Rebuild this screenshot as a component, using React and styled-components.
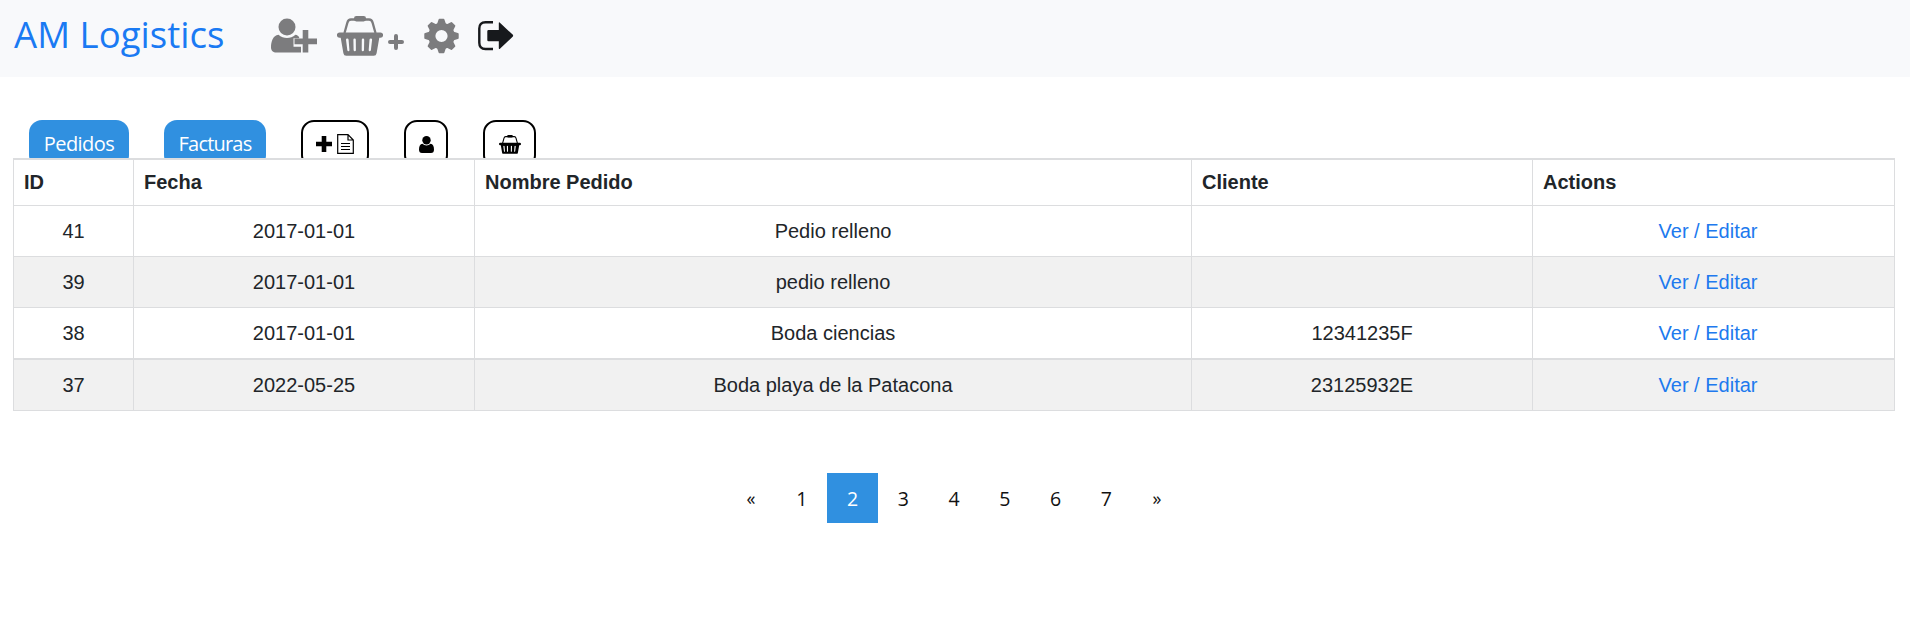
import React from "react";
import styled, { createGlobalStyle, css } from "styled-components";

const GlobalStyle = createGlobalStyle`
  * { box-sizing: border-box; }
  body {
    margin: 0;
    background: #fff;
    color: #212529;
    font-family: "Open Sans", "Noto Sans", sans-serif;
    font-size: 20px;
    overflow: hidden;
  }
`;

const Navbar = styled.header`
  display: flex;
  align-items: flex-start;
  height: 77px;
  padding-left: 14px;
  background: #f8f9fb;
`;

const Brand = styled.a`
  width: 257px;
  padding-top: 9px;
  color: #1a7af3;
  font-size: 36.5px;
  line-height: 50px;
  letter-spacing: 0.05px;
  white-space: nowrap;
  text-decoration: none;
`;

const NavIcons = styled.nav`
  display: flex;
  align-items: flex-start;
  padding-top: 14px;
  color: #7c7c7e;
`;

const NavIcon = styled.a`
  display: flex;
  margin-right: ${(p) => p.$gap || 0}px;
  color: ${(p) => (p.$dark ? "#17191c" : "inherit")};
  svg { display: block; }
`;

const Tabs = styled.div`
  display: flex;
  gap: 35px;
  height: 81px;
  padding: 43px 0 0 29px;
  overflow: hidden;
`;

const Tab = styled.button`
  display: flex;
  flex: none;
  align-items: center;
  justify-content: center;
  gap: 5px;
  width: ${(p) => p.$width}px;
  height: 48px;
  padding: 0;
  border-radius: 13px;
  font: inherit;
  ${(p) =>
    p.$filled
      ? css`
          padding-bottom: 2px;
          border: 0;
          background: #3090e0;
          color: #fff;
          letter-spacing: ${p.$tracking}px;
        `
      : css`
          border: 2px solid #000;
          background: #fff;
          color: #000;
        `}
  svg { display: block; }
`;

const Table = styled.div`
  width: 1882px;
  margin-left: 13px;
  border-top: 2px solid #dcdddf;
  border-right: 1px solid #dcdddf;
  font-family: "Liberation Sans", Arial, sans-serif;
`;

const Row = styled.div`
  display: grid;
  grid-template-columns: 120px 341px 717px 341px 362px;
  height: ${(p) => p.$height}px;
  border-bottom: ${(p) => p.$line || 1}px solid #dcdddf;
  background: ${(p) => (p.$striped ? "#f1f1f1" : "#fff")};
`;

const Cell = styled.div`
  display: flex;
  align-items: center;
  justify-content: center;
  padding-right: ${(p) => (p.$actions ? 11 : 0)}px;
  padding-bottom: 1px;
  border-left: 1px solid #dcdddf;
  line-height: 30px;
`;

const HeadCell = styled(Cell)`
  justify-content: flex-start;
  padding-left: 10px;
  padding-bottom: 2px;
  font-weight: 700;
`;

const ActionLink = styled.a`
  color: #2079ee;
  text-decoration: none;
`;

const Pagination = styled.nav`
  display: flex;
  justify-content: center;
  margin-top: 62px;
  padding-right: 2px;
`;

const Page = styled.a`
  width: 50.75px;
  height: 50px;
  line-height: 51px;
  text-align: center;
  text-decoration: none;
  font-size: ${(p) => (p.$arrow ? 18 : 19.5)}px;
  color: ${(p) => (p.$active ? "#fff" : "#111")};
  background: ${(p) => (p.$active ? "#3090e0" : "transparent")};
`;

const UserPlusIcon = () => (
  <svg width="47" height="40" viewBox="0 0 47 40" fill="currentColor">
    <circle cx="16" cy="13" r="8.5" />
    <path d="M7.5 20.8C10 23 13 24 16 24s6-1 8.4-3.2c1.800.300 3.200 1.300 4 2.900H28v.500h-5.500v8.500H30v5.900H5.300C2.200 38.600 0 36.600 0 33.500c0-5.600 1.800-12 7.500-12.700z" />
    <path d="M31.700 16h5.600v8.600H46v5.600h-8.700v8.400h-5.600v-8.400h-8.200v-5.600h8.200z" />
  </svg>
);

const BasketIcon = ({ width = 46, height = 42 }) => (
  <svg width={width} height={height} viewBox="0 0 46 42" fill="currentColor">
    <path d="M7.500 19 10.400 8.600Q11.200 5.500 14 5.500h18q2.800 0 3.600 3.100L38.500 19" fill="none" stroke="currentColor" strokeWidth="2.300" />
    <rect x="17" y="2" width="12" height="5.400" rx="2.300" />
    <path
      fillRule="evenodd"
      d="M2.500 18.600h41a2.500 2.500 0 0 1 0 5.200h-1.200l-2.700 15.400Q39.200 41.700 36.700 41.700H9.300Q6.800 41.700 6.400 39.200L3.700 23.800H2.500a2.500 2.500 0 0 1 0-5.200zM9 25.800l1.300 10.300q.2 1.200 1.200 1.200t.9-1.300l-.8-10.200q-.2-1.200-1.400-1.200T9 25.800zM16.400 25.800l.2 10.200q.1 1.300 1.200 1.300t1.100-1.300l-.1-10.200q0-1.200-1.200-1.200t-1.200 1.200zM24.800 25.800l-.1 10.200q0 1.300 1.100 1.300t1.200-1.300l.2-10.200q0-1.200-1.200-1.200t-1.200 1.200zM32.500 25.800l-.8 10.200q0 1.300 1 1.300t1.200-1.200l1.200-10.300q.1-1.200-1.200-1.200t-1.400 1.200z"
    />
  </svg>
);

const PlusIcon = ({ size = 16, top = 0, weight = 4, cap = "round" }) => (
  <svg width={size} height={size + top} viewBox={`0 ${-top} ${size} ${size + top}`} stroke="currentColor" strokeLinecap={cap}>
    <path
      d={cap === "round" ? `M${size / 2} 2v${size - 4}M2 ${size / 2}h${size - 4}` : `M${size / 2} 0v${size}M0 ${size / 2}h${size}`}
      strokeWidth={weight}
    />
  </svg>
);

const GearIcon = () => (
  <svg width="35" height="40" viewBox="-17.500 -22 35 40" fill="currentColor">
    <path
      fillRule="evenodd"
      d="M13.200 0A13.200 13.200 0 1 0-13.200 0A13.200 13.200 0 1 0 13.200 0zM6.100 0A6.100 6.100 0 1 1-6.100 0A6.100 6.100 0 1 1 6.100 0z"
    />
    {[0, 45, 90, 135, 180, 225, 270, 315].map((angle) => (
      <path
        key={angle}
        transform={`rotate(${angle})`}
        d="M-4.600-11.500-3-16.300Q-2.800-17.200-2-17.200H2Q2.800-17.200 3-16.300L4.600-11.500z"
      />
    ))}
  </svg>
);

const SignOutIcon = () => (
  <svg width="36" height="38" viewBox="0 0 36 38">
    <path d="M15 8.300H7.500Q1.300 8.300 1.300 14.500v14.300Q1.300 35 7.500 35H15" fill="none" stroke="currentColor" strokeWidth="2.400" />
    <path
      d="M10.500 16h10.300V9.300Q20.800 7.500 22.200 8.900L34.600 20.600Q35.700 21.700 34.600 22.800L22.200 34.500Q20.800 35.900 20.800 34V27.200H10.500Q9.300 27.200 9.300 26V17.200Q9.300 16 10.500 16z"
      fill="currentColor"
    />
  </svg>
);

const DocumentIcon = () => (
  <svg width="17" height="20" viewBox="0 0 17 20" fill="none" stroke="currentColor">
    <path d="M.700.700H11L16.300 6v13.300H.700zM11 .700V6h5.300" strokeWidth="1.200" />
    <path d="M4 9.500h9M4 12.500h9M4 15.500h9" strokeWidth="1.200" />
  </svg>
);

const UserIcon = () => (
  <svg width="15" height="17" viewBox="0 0 15 17" fill="currentColor">
    <circle cx="7.500" cy="4.300" r="4.200" />
    <path d="M3.400 7.800Q5.200 9.500 7.500 9.500t4.100-1.700Q15 8.300 15 13.500 15 17 12 17H3Q0 17 0 13.500 0 8.300 3.400 7.800z" />
  </svg>
);

const orders = [
  { id: 41, date: "2017-01-01", name: "Pedio relleno", client: "" },
  { id: 39, date: "2017-01-01", name: "pedio relleno", client: "" },
  { id: 38, date: "2017-01-01", name: "Boda ciencias", client: "12341235F" },
  { id: 37, date: "2022-05-25", name: "Boda playa de la Patacona", client: "23125932E" },
];

const columns = ["ID", "Fecha", "Nombre Pedido", "Cliente", "Actions"];
const pages = ["«", "1", "2", "3", "4", "5", "6", "7", "»"];

export default function App() {
  return (
    <>
      <GlobalStyle />
      <Navbar>
        <Brand>AM Logistics</Brand>
        <NavIcons>
          <NavIcon $gap={19}><UserPlusIcon /></NavIcon>
          <NavIcon $gap={5}><BasketIcon /></NavIcon>
          <NavIcon $gap={20}><PlusIcon top={20} /></NavIcon>
          <NavIcon $gap={19}><GearIcon /></NavIcon>
          <NavIcon $dark><SignOutIcon /></NavIcon>
        </NavIcons>
      </Navbar>
      <Tabs>
        <Tab $filled $width={100} $tracking={-0.55}>Pedidos</Tab>
        <Tab $filled $width={102} $tracking={-0.8}>Facturas</Tab>
        <Tab $width={68}><PlusIcon weight={4.6} cap="butt" /><DocumentIcon /></Tab>
        <Tab $width={44}><UserIcon /></Tab>
        <Tab $width={53}><BasketIcon width={22} height={20} /></Tab>
      </Tabs>
      <Table>
        <Row $height={46}>
          {columns.map((title) => <HeadCell key={title}>{title}</HeadCell>)}
        </Row>
        {orders.map((order, index) => (
          <Row
            key={order.id}
            $striped={index % 2 === 1}
            $height={index === 2 ? 52 : 51}
            $line={index === 2 ? 2 : 1}
          >
            <Cell>{order.id}</Cell>
            <Cell>{order.date}</Cell>
            <Cell>{order.name}</Cell>
            <Cell>{order.client}</Cell>
            <Cell $actions><ActionLink>Ver / Editar</ActionLink></Cell>
          </Row>
        ))}
      </Table>
      <Pagination>
        {pages.map((label) => (
          <Page key={label} $active={label === "2"} $arrow={label === "«" || label === "»"}>
            {label}
          </Page>
        ))}
      </Pagination>
    </>
  );
}
